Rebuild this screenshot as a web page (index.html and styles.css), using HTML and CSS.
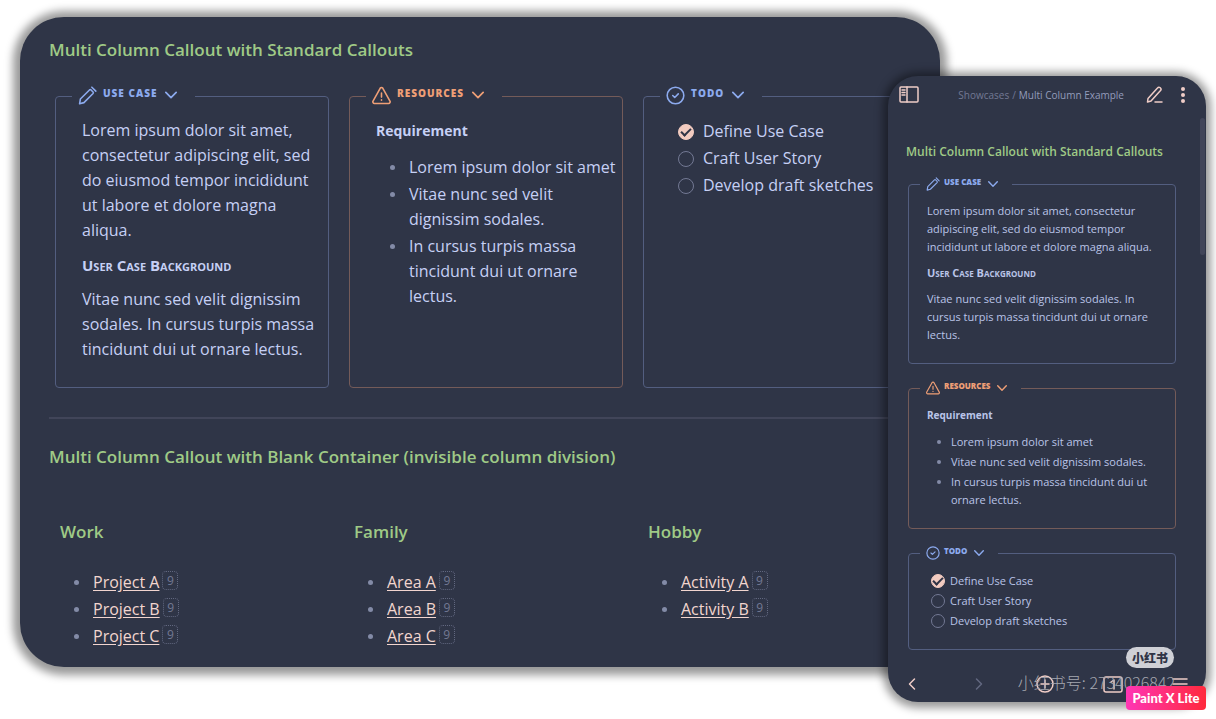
FILE: index.html
```html
<!DOCTYPE html>
<html lang="en">
<head>
<meta charset="utf-8">
<title>Multi Column Example</title>
<link rel="stylesheet" href="styles.css">
</head>
<body>
<svg class="sprite" aria-hidden="true">
  <symbol id="pencil" viewBox="0 0 24 24"><path d="M2 22.500l1-6L14.500 5a1.500 1.500 0 0 1 2 0L19 7.500a1.500 1.500 0 0 1 0 2L7.500 21z M17.500 1.500l5 5"/></symbol>
  <symbol id="alert" viewBox="0 0 24 24"><path d="M10.290 2.860L1.320 19a2 2 0 0 0 1.710 3h17.940a2 2 0 0 0 1.710-3L13.710 2.860a2 2 0 0 0-3.420 0zM12 9v5M12 17.500v.5"/></symbol>
  <symbol id="check" viewBox="0 0 24 24"><circle cx="12" cy="12" r="10.500"/><path d="M8.500 12l2.500 2.500 4.500-4.500"/></symbol>
  <symbol id="chevron" viewBox="0 0 14 8"><path d="M1 1l6 6 6-6"/></symbol>
</svg>

<main class="stage">
  <article class="window desktop">
    <h2 class="title">Multi Column Callout with Standard Callouts</h2>
    <div class="columns">
      <fieldset class="callout blue">
        <legend><button class="toggle" type="button"><svg class="kind"><use href="#pencil"/></svg><span>Use Case</span><svg class="fold"><use href="#chevron"/></svg></button></legend>
        <p>Lorem ipsum dolor sit amet, consectetur adipiscing elit, sed do eiusmod tempor incididunt ut labore et dolore magna aliqua.</p>
        <h3 class="caps">User Case Background</h3>
        <p>Vitae nunc sed velit dignissim sodales. In cursus turpis massa tincidunt dui ut ornare lectus.</p>
      </fieldset>
      <fieldset class="callout orange">
        <legend><button class="toggle" type="button"><svg class="kind"><use href="#alert"/></svg><span>Resources</span><svg class="fold"><use href="#chevron"/></svg></button></legend>
        <h3 class="strong">Requirement</h3>
        <ul class="bullets">
          <li>Lorem ipsum dolor sit amet</li>
          <li>Vitae nunc sed velit dignissim sodales.</li>
          <li>In cursus turpis massa tincidunt dui ut ornare lectus.</li>
        </ul>
      </fieldset>
      <fieldset class="callout blue">
        <legend><button class="toggle" type="button"><svg class="kind"><use href="#check"/></svg><span>Todo</span><svg class="fold"><use href="#chevron"/></svg></button></legend>
        <ul class="tasks">
          <li><label><input type="checkbox" checked>Define Use Case</label></li>
          <li><label><input type="checkbox">Craft User Story</label></li>
          <li><label><input type="checkbox">Develop draft sketches</label></li>
        </ul>
      </fieldset>
    </div>
    <hr class="rule">
    <h2 class="title">Multi Column Callout with Blank Container (invisible column division)</h2>
    <div class="columns blank">
      <section>
        <h2 class="title">Work</h2>
        <ul class="bullets">
          <li><a href="#">Project A</a><sup>9</sup></li>
          <li><a href="#">Project B</a><sup>9</sup></li>
          <li><a href="#">Project C</a><sup>9</sup></li>
        </ul>
      </section>
      <section>
        <h2 class="title">Family</h2>
        <ul class="bullets">
          <li><a href="#">Area A</a><sup>9</sup></li>
          <li><a href="#">Area B</a><sup>9</sup></li>
          <li><a href="#">Area C</a><sup>9</sup></li>
        </ul>
      </section>
      <section>
        <h2 class="title">Hobby</h2>
        <ul class="bullets">
          <li><a href="#">Activity A</a><sup>9</sup></li>
          <li><a href="#">Activity B</a><sup>9</sup></li>
        </ul>
      </section>
    </div>
  </article>

  <article class="window phone">
    <header class="topbar">
      <button class="icon" type="button" aria-label="Toggle sidebar"><svg width="20" height="18" viewBox="0 0 20 18"><rect x="1" y="1" width="18" height="15" rx="1"/><path d="M8 1v15M3 4h3M3 6.500h3M3 9h3"/></svg></button>
      <nav class="crumbs"><a href="#">Showcases</a><span>/</span><a class="here" href="#">Multi Column Example</a></nav>
      <button class="icon" type="button" aria-label="Edit"><svg width="18" height="18" viewBox="0 0 18 18"><path d="M2 12.500L11.500 2a1.800 1.800 0 0 1 3 2.500L5 15l-3.500 1zM9 16h7"/></svg></button>
      <button class="icon" type="button" aria-label="More"><svg width="6" height="18" viewBox="0 0 6 18"><g class="dots"><circle cx="3" cy="3" r="2"/><circle cx="3" cy="9" r="2"/><circle cx="3" cy="15" r="2"/></g></svg></button>
    </header>
    <div class="note">
      <h2 class="title">Multi Column Callout with Standard Callouts</h2>
      <fieldset class="callout blue">
        <legend><button class="toggle" type="button"><svg class="kind"><use href="#pencil"/></svg><span>Use Case</span><svg class="fold"><use href="#chevron"/></svg></button></legend>
        <p>Lorem ipsum dolor sit amet, consectetur adipiscing elit, sed do eiusmod tempor incididunt ut labore et dolore magna aliqua.</p>
        <h3 class="caps">User Case Background</h3>
        <p>Vitae nunc sed velit dignissim sodales. In cursus turpis massa tincidunt dui ut ornare lectus.</p>
      </fieldset>
      <fieldset class="callout orange">
        <legend><button class="toggle" type="button"><svg class="kind"><use href="#alert"/></svg><span>Resources</span><svg class="fold"><use href="#chevron"/></svg></button></legend>
        <h3 class="strong">Requirement</h3>
        <ul class="bullets">
          <li>Lorem ipsum dolor sit amet</li>
          <li>Vitae nunc sed velit dignissim sodales.</li>
          <li>In cursus turpis massa tincidunt dui ut ornare lectus.</li>
        </ul>
      </fieldset>
      <fieldset class="callout blue">
        <legend><button class="toggle" type="button"><svg class="kind"><use href="#check"/></svg><span>Todo</span><svg class="fold"><use href="#chevron"/></svg></button></legend>
        <ul class="tasks">
          <li><label><input type="checkbox" checked>Define Use Case</label></li>
          <li><label><input type="checkbox">Craft User Story</label></li>
          <li><label><input type="checkbox">Develop draft sketches</label></li>
        </ul>
      </fieldset>
    </div>
    <div class="scrollbar"></div>
    <nav class="bottombar">
      <button class="icon" type="button" aria-label="Back"><svg width="18" height="18" viewBox="0 0 18 18"><path d="M11.500 4l-5 5 5 5"/></svg></button>
      <button class="icon dim" type="button" aria-label="Forward"><svg width="18" height="18" viewBox="0 0 18 18"><path d="M6.500 4l5 5-5 5"/></svg></button>
      <button class="icon" type="button" aria-label="New"><svg width="18" height="18" viewBox="0 0 18 18"><circle cx="9" cy="9" r="8"/><path d="M9 5v8M5 9h8"/></svg></button>
      <button class="icon" type="button" aria-label="Tabs"><svg width="20" height="18" viewBox="0 0 20 18"><rect x="1" y="2" width="18" height="15" rx="2"/><path d="M8 7l3-2v9"/></svg></button>
      <button class="icon" type="button" aria-label="Menu"><svg width="18" height="18" viewBox="0 0 18 18"><path d="M2 4h14M2 9h14M2 14h14"/></svg></button>
    </nav>
  </article>

  <span class="mark-pill">小红书</span>
  <span class="mark-id">小红书号: 2734026842</span>
  <span class="mark-app">Paint X Lite</span>
</main>
</body>
</html>
```
FILE: styles.css
```css
* { box-sizing: border-box; }
body {
  margin: 0;
  background: #fff;
  color: #c6d0f5;
  font-family: "Open Sans", "Noto Sans", sans-serif;
}
.sprite { position: absolute; width: 0; height: 0; }
svg { fill: none; stroke: currentColor; stroke-linecap: round; stroke-linejoin: round; }
h2, h3, p, ul { margin: 0; }
ul { padding: 0; list-style: none; }
button { padding: 0; border: 0; background: none; color: inherit; font: inherit; cursor: pointer; }
a { color: #f2d5cf; }

.stage { position: relative; padding: 17px 276px 52px 20px; min-height: 719px; }
.window { background: #2f3547; }
.desktop {
  padding: 20px 23px 18px 29px;
  border-radius: 44px;
  box-shadow: 0 1px 8px 7px rgba(0, 0, 0, .4);
  font-size: 16px;
  line-height: 25px;
}
.title { color: #9fca86; font-size: 17px; font-weight: 600; line-height: 26px; }

.columns { display: grid; grid-template-columns: repeat(3, 1fr); gap: 20px; padding-left: 6px; margin-top: 23px; }
.callout { min-width: 0; margin: 0; padding: 12px 4px 25px 26px; border: 1px solid; border-radius: 4px; }
.callout p { padding-right: 8px; }
.callout legend { margin-left: -10px; padding: 0 18px 0 6px; }
.blue { border-color: #535e80; }
.orange { border-color: #745b59; }
.blue .toggle { color: #8caaee; }
.orange .toggle { color: #ef9f76; }
.toggle { display: flex; align-items: center; height: 20px; padding-bottom: 2px; }
.toggle span { padding: 0 8px 4px 6px; font-size: 10px; font-weight: 800; letter-spacing: 1px; line-height: 16px; text-transform: uppercase; }
.kind { width: 19px; height: 19px; stroke-width: 2; }
.fold { width: 12px; height: 8px; stroke-width: 2; }
.caps { margin: 12px 0; font-size: 15px; font-weight: 700; font-variant: small-caps; line-height: 20px; }
.strong { margin-bottom: 12px; font-size: 14px; font-weight: 700; line-height: 25px; }

.bullets { display: grid; gap: 2px; padding-left: 33px; }
.bullets li { position: relative; }
.bullets li::before {
  content: "";
  position: absolute;
  left: -19px;
  top: 10px;
  width: 5px;
  height: 5px;
  border-radius: 50%;
  background: #838ba7;
}
.tasks { display: grid; gap: 2px; padding: 1px 0 0 8px; }
.tasks label { display: flex; align-items: center; gap: 9px; white-space: nowrap; }
.tasks input {
  appearance: none;
  width: 16px;
  height: 16px;
  margin: 0;
  border: 1px solid #737994;
  border-radius: 50%;
  display: grid;
  place-items: center;
}
.tasks input:checked { border-color: #f2cbc0; background: #f2cbc0; }
.tasks input:checked::before {
  content: "";
  width: 8px;
  height: 4px;
  margin-bottom: 2px;
  border: solid #303446;
  border-width: 0 0 2px 2px;
  transform: rotate(-45deg);
}

.rule { height: 2px; margin: 29px 0 25px; border: 0; background: #414559; }
.blank { margin-top: 49px; }
.blank section { padding-left: 5px; }
.blank .bullets { margin-top: 25px; }
.blank a { text-underline-offset: 2px; }
sup {
  display: inline-block;
  width: 16px;
  margin-left: 3px;
  border: 1px dotted #626880;
  border-radius: 4px;
  color: #737994;
  font-size: 12px;
  line-height: 17px;
  text-align: center;
  vertical-align: 3px;
}

.phone {
  position: absolute;
  top: 76px;
  right: 10px;
  width: 318px;
  border-radius: 30px;
  box-shadow: 0 1px 8px 5px rgba(0, 0, 0, .4);
  color: #bac4e8;
  font-size: 11px;
  line-height: 18px;
}
.topbar { display: flex; align-items: center; padding: 10px 20px 0 11px; color: #f0cdc7; }
.icon { display: grid; place-items: center; }
.icon svg { stroke-width: 1.5; }
.dots { fill: currentColor; stroke: none; }
.crumbs { display: flex; gap: 3px; margin: 0 22px 0 auto; font-size: 10px; color: #737994; }
.crumbs a { color: #737994; text-decoration: none; }
.crumbs .here { color: #949cbb; }
.topbar .icon:last-child { margin-left: 16px; }
.note { padding: 36px 30px 0 20px; }
.note .title { margin-left: -2px; font-size: 12px; line-height: 24px; white-space: nowrap; }
.note .callout { padding: 10px 14px 19px 18px; }
.note .callout p { padding-right: 0; }
.note .title + .callout { margin-top: 12px; }
.note .callout + .callout { margin-top: 16px; }
.note .callout legend { margin-left: -7px; padding: 0 14px 0 6px; }
.note .toggle { height: 16px; padding-bottom: 0; }
.note .toggle span { padding: 0 7px 4px 4px; font-size: 8px; letter-spacing: normal; line-height: 12px; }
.note .kind { width: 14px; height: 14px; }
.note .fold { width: 10px; height: 6px; }
.note .caps { margin: 8px 0; font-size: 11px; line-height: 18px; }
.note .strong { margin-bottom: 9px; font-size: 10px; line-height: 18px; }
.note .bullets { padding-left: 24px; }
.note .bullets li::before { left: -14px; top: 7px; width: 4px; height: 4px; }
.note .tasks { padding-left: 4px; }
.note .tasks label { gap: 5px; }
.note .tasks input { width: 14px; height: 14px; }
.scrollbar { position: absolute; top: 42px; right: 1px; width: 5px; height: 137px; border-radius: 3px; background: #414559; }
.bottombar { display: flex; justify-content: space-between; padding: 25px 17px 9px 15px; color: #f0cdc7; }
.bottombar .dim { color: #626880; }

.mark-pill, .mark-id, .mark-app { position: absolute; white-space: nowrap; }
.mark-pill {
  top: 647px; right: 42px; width: 48px;
  border-radius: 11px;
  background: #cfd0d6;
  color: #303446;
  font: 900 12px/21px "Noto Sans CJK SC", sans-serif;
  text-align: center;
}
.mark-id { top: 672px; right: 41px; color: #a5a7b0; font: 300 16px/20px "Noto Sans CJK SC", sans-serif; }
.mark-app {
  top: 686px; right: 10px; width: 80px;
  border-radius: 4px;
  background: linear-gradient(90deg, #ff35b5, #ff2a3c);
  color: #fff;
  font: 900 13px/24px Lato, sans-serif;
  text-align: center;
}
```
